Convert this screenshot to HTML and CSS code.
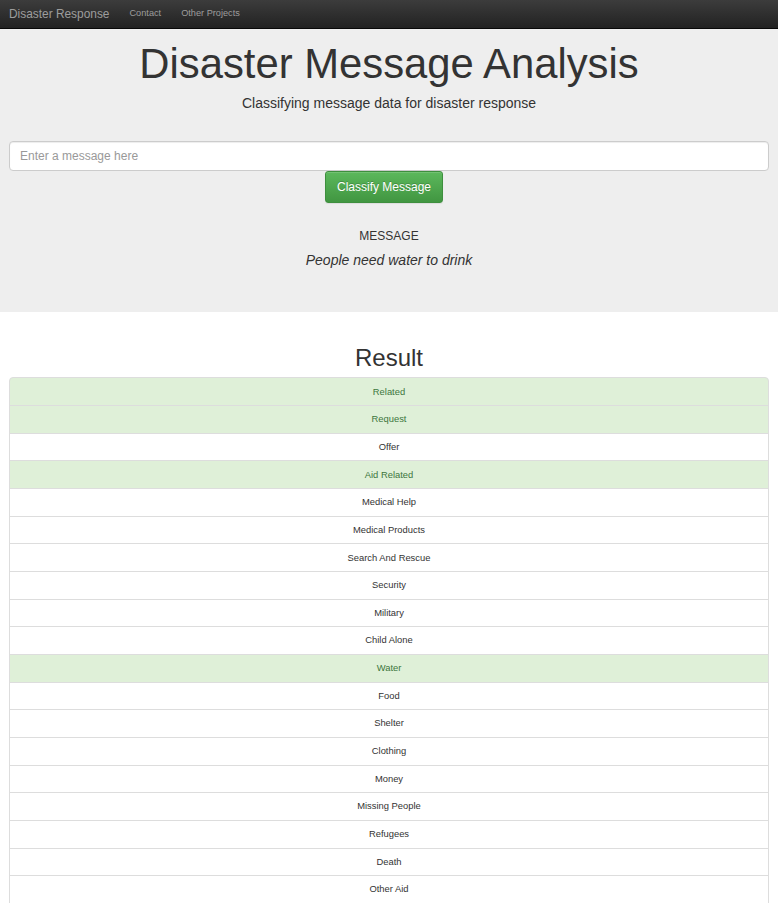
FILE: index.html
```html
<!DOCTYPE html>
<html>
<head>
<meta charset="utf-8">
<link rel="stylesheet" href="styles.css">
</head>
<body>
<nav class="navbar">
  <a class="brand">Disaster Response</a>
  <a class="nav-link">Contact</a>
  <a class="nav-link">Other Projects</a>
</nav>
<div class="jumbotron">
  <h1 class="title">Disaster Message Analysis</h1>
  <p class="subtitle">Classifying message data for disaster response</p>
  <div class="form">
    <input class="input" type="text" placeholder="Enter a message here">
    <div class="btn-row"><button class="btn">Classify Message</button></div>
  </div>
  <div class="msg-label">MESSAGE</div>
  <div class="msg-text">People need water to drink</div>
</div>
<div class="results">
  <h2 class="result-title">Result</h2>
  <ul class="list">
    <li class="item ok">Related</li>
    <li class="item ok">Request</li>
    <li class="item">Offer</li>
    <li class="item ok">Aid Related</li>
    <li class="item">Medical Help</li>
    <li class="item">Medical Products</li>
    <li class="item">Search And Rescue</li>
    <li class="item">Security</li>
    <li class="item">Military</li>
    <li class="item">Child Alone</li>
    <li class="item ok">Water</li>
    <li class="item">Food</li>
    <li class="item">Shelter</li>
    <li class="item">Clothing</li>
    <li class="item">Money</li>
    <li class="item">Missing People</li>
    <li class="item">Refugees</li>
    <li class="item">Death</li>
    <li class="item">Other Aid</li>
  </ul>
</div>
</body>
</html>
```
FILE: styles.css
```css
html, body {
  margin: 0;
  padding: 0;
}
body {
  font-family: "Liberation Sans", Arial, sans-serif;
  color: #333;
  background: #fff;
  font-size: 10px;
  line-height: 1.42857;
}
.navbar {
  height: 28px;
  background: linear-gradient(to bottom, #3c3c3c 0%, #222 100%);
  border-bottom: 1px solid #080808;
  display: flex;
  align-items: center;
  padding: 0 9px;
}
.brand {
  color: #9d9d9d;
  font-size: 11.9px;
  margin-right: 20px;
}
.nav-link {
  color: #9d9d9d;
  font-size: 9.2px;
  margin-right: 20px;
}
.jumbotron {
  background: #eee;
  height: 283px;
  padding: 10px 9px 0;
  box-sizing: border-box;
  text-align: center;
}
.title {
  margin: 0;
  font-size: 41.8px;
  font-weight: 400;
  line-height: 1.2;
}
.subtitle {
  margin: 5px 0 0;
  font-size: 14px;
  line-height: 1.4;
}
.form {
  margin-top: 27px;
}
.input {
  display: block;
  width: 100%;
  box-sizing: border-box;
  height: 30px;
  border: 1px solid #ccc;
  border-radius: 4px;
  padding: 0 10px;
  font-family: inherit;
  font-size: 12px;
  color: #555;
  background: #fff;
  box-shadow: inset 0 1px 1px rgba(0,0,0,.075);
}
.input::placeholder {
  color: #999;
}
.btn-row {
  display: flex;
  justify-content: center;
  padding-right: 10px;
}
.btn {
  width: 118px;
  height: 32px;
  border: 1px solid #3e8f3e;
  border-radius: 3px;
  background: linear-gradient(to bottom, #5cb85c 0%, #419641 100%);
  color: #fff;
  font-family: inherit;
  font-size: 12px;
  text-shadow: 0 -1px 0 rgba(0,0,0,.2);
  box-shadow: inset 0 1px 0 rgba(255,255,255,.15), 0 1px 1px rgba(0,0,0,.075);
}
.msg-label {
  margin-top: 25px;
  font-size: 12px;
}
.msg-text {
  margin-top: 6px;
  font-size: 14px;
  font-style: italic;
}
.results {
  padding: 0 9px;
}
.result-title {
  text-align: center;
  font-size: 24px;
  font-weight: 400;
  margin: 33px 0 6px;
  line-height: 1.1;
}
.list {
  list-style: none;
  margin: 0;
  padding: 0;
}
.item {
  text-align: center;
  padding: 6.2px 15px;
  border: 1px solid #ddd;
  margin-bottom: -1px;
  background: #fff;
  font-size: 9.4px;
  line-height: 14.28px;
}
.item:first-child {
  border-top-left-radius: 4px;
  border-top-right-radius: 4px;
}
.item.ok {
  background: #dff0d8;
  color: #3c763d;
}
```
